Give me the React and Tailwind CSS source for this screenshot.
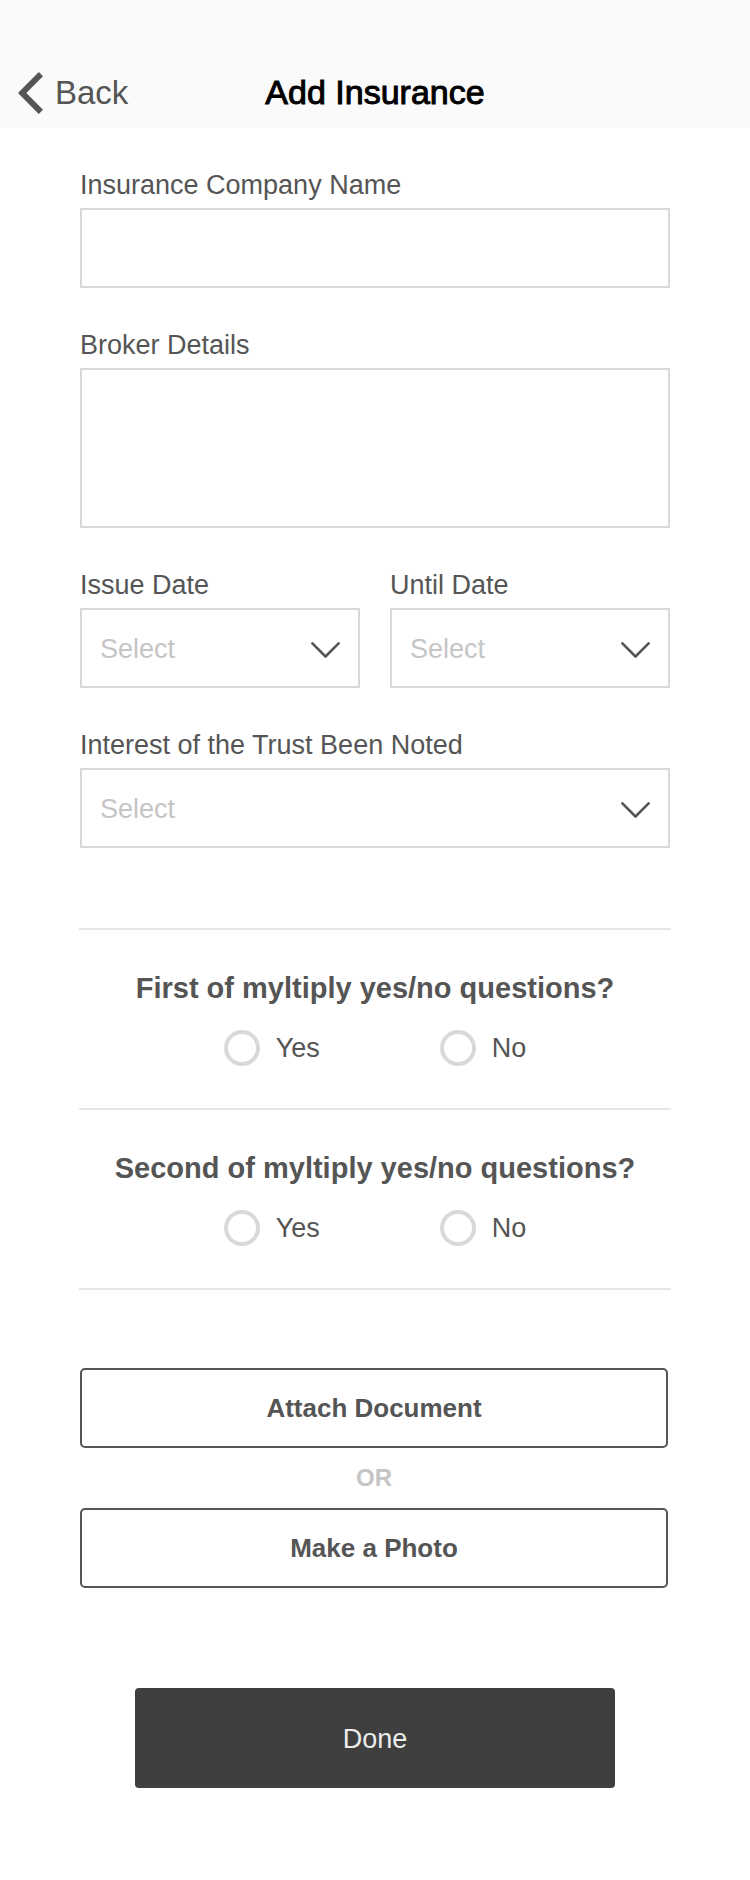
import { useId } from "react";

const boxClass =
  "block w-full rounded-none border-2 border-[#d9d9d9] bg-white px-[18px] text-[27px] text-[#555] outline-none focus:border-[#999]";

function Field({ label, children }) {
  const id = useId();
  return (
    <div>
      <label htmlFor={id} className="mb-1.5 block text-[27px] leading-[34px]">
        {label}
      </label>
      {children(id)}
    </div>
  );
}

function SelectField({ label, options }) {
  return (
    <Field label={label}>
      {(id) => (
        <div className="relative">
          <select
            id={id}
            defaultValue=""
            className="block h-20 w-full appearance-none rounded-none border-2 border-[#d9d9d9] bg-white pt-0.5 pr-16 pl-[18px] text-[27px] text-[#c5c5c5] outline-none focus:border-[#999]"
          >
            <option value="">Select</option>
            {options.map((option) => (
              <option key={option}>{option}</option>
            ))}
          </select>
          <svg
            viewBox="0 0 29 16"
            className="pointer-events-none absolute top-[34px] right-5 h-4 w-[29px]"
            fill="none"
            stroke="#555"
            strokeWidth="2.6"
            strokeLinecap="round"
            strokeLinejoin="round"
            aria-hidden="true"
          >
            <path d="M1.4 1.4 14.5 14.5 27.6 1.4" />
          </svg>
        </div>
      )}
    </Field>
  );
}

function Question({ name, children }) {
  return (
    <div
      role="radiogroup"
      aria-labelledby={name}
      className="border-t-2 border-[#e6e6e6] pt-[38px] pb-[42px]"
    >
      <h2 id={name} className="text-center text-[29px] leading-10 font-bold">
        {children}
      </h2>
      <div className="mt-[22px] flex justify-center gap-[120px]">
        {["Yes", "No"].map((answer) => (
          <label key={answer} className="flex items-center gap-4 text-[27px] leading-9">
            <input
              type="radio"
              name={name}
              value={answer}
              className="size-9 appearance-none rounded-full border-4 border-[#d9d9d9] bg-white checked:border-[#555]"
            />
            {answer}
          </label>
        ))}
      </div>
    </div>
  );
}

function OutlineButton({ children }) {
  return (
    <button
      type="button"
      className="h-20 w-full rounded-[5px] border-2 border-[#555] bg-white text-[26px] font-bold"
    >
      {children}
    </button>
  );
}

export default function App() {
  return (
    <div className="bg-white font-['Liberation_Sans',Arial,sans-serif] text-[#555]">
      <header className="grid h-32 grid-cols-[1fr_auto_1fr] items-start bg-[#fafafa] px-[18px] pt-[72px]">
        <a href="#back" className="flex items-center gap-3 text-[33px] leading-[42px]">
          <svg
            viewBox="0 0 25 42"
            className="h-[42px] w-[25px]"
            fill="none"
            stroke="#555"
            strokeWidth="6"
            aria-hidden="true"
          >
            <path d="M22.9 2.1 4.2 21 22.9 39.9" />
          </svg>
          Back
        </a>
        <h1 className="text-[34px] leading-10 text-black [-webkit-text-stroke:1px_#000]">
          Add Insurance
        </h1>
      </header>

      <form className="px-20 pt-10 pb-[92px]">
        <div className="flex flex-col gap-10">
          <Field label="Insurance Company Name">
            {(id) => <input id={id} type="text" className={`${boxClass} h-20`} />}
          </Field>
          <Field label="Broker Details">
            {(id) => <textarea id={id} className={`${boxClass} h-40 resize-none py-4`} />}
          </Field>
          <div className="grid grid-cols-2 gap-[30px]">
            <SelectField label="Issue Date" options={["Today", "Yesterday"]} />
            <SelectField label="Until Date" options={["In one year", "In two years"]} />
          </div>
          <SelectField label="Interest of the Trust Been Noted" options={["Yes", "No"]} />
        </div>

        <div className="-mx-px mt-20 border-b-2 border-[#e6e6e6]">
          <Question name="question-first">First of myltiply yes/no questions?</Question>
          <Question name="question-second">Second of myltiply yes/no questions?</Question>
        </div>

        <div className="mt-[78px] mr-0.5">
          <OutlineButton>Attach Document</OutlineButton>
          <p className="text-center text-2xl leading-[60px] font-bold text-[#c5c5c5]">OR</p>
          <OutlineButton>Make a Photo</OutlineButton>
        </div>

        <button
          type="submit"
          className="mx-auto mt-[100px] block h-[100px] w-[480px] max-w-full rounded-[4px] bg-[#3f3f3f] pt-0.5 text-[27px] text-[#ececec]"
        >
          Done
        </button>
      </form>
    </div>
  );
}
